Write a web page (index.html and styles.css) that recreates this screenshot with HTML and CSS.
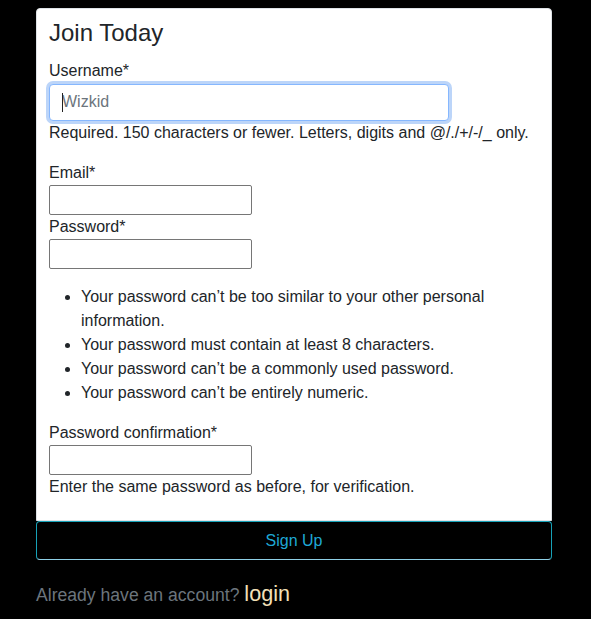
FILE: index.html
```html
<!DOCTYPE html>
<html lang="en">
<head>
<meta charset="utf-8">
<title>Join Today</title>
<link rel="stylesheet" href="styles.css">
</head>
<body>
<div class="page">
  <form class="card">
    <h1 class="title">Join Today</h1>
    <label class="label">Username*</label>
    <div class="focus-wrap">
      <input class="input input-focus" type="text" placeholder="Wizkid">
      <span class="caret"></span>
    </div>
    <p class="help help-gap">Required. 150 characters or fewer. Letters, digits and @/./+/-/_ only.</p>
    <label class="label">Email*</label>
    <input class="input input-plain" type="email">
    <label class="label">Password*</label>
    <input class="input input-plain" type="password">
    <ul class="rules">
      <li>Your password can’t be too similar to your other personal information.</li>
      <li>Your password must contain at least 8 characters.</li>
      <li>Your password can’t be a commonly used password.</li>
      <li>Your password can’t be entirely numeric.</li>
    </ul>
    <label class="label">Password confirmation*</label>
    <input class="input input-plain" type="password">
    <p class="help">Enter the same password as before, for verification.</p>
  </form>
  <button class="signup" type="button">Sign Up</button>
  <div class="already">Already have an account? <a class="login" href="#">login</a></div>
</div>
</body>
</html>
```
FILE: styles.css
```css
html, body {
  margin: 0;
  background: #000;
}
body {
  font-family: "Liberation Sans", Arial, sans-serif;
  font-size: 16px;
  line-height: 1.5;
  color: #212529;
}
.page {
  padding: 8px 0 0 36px;
  width: 516px;
}
.card {
  display: flex;
  flex-direction: column;
  align-items: flex-start;
  background: #fff;
  border: 1px solid #dee2e6;
  border-radius: 4px 4px 0 0;
  padding: 10px 12px 21px;
}
.title {
  font-size: 24px;
  font-weight: 400;
  line-height: 1.2;
  margin: 0 0 11px;
}
.label {
  display: block;
  line-height: 24px;
}
.focus-wrap {
  position: relative;
  margin-top: 1px;
}
.input {
  box-sizing: border-box;
  font-family: inherit;
  font-size: 16px;
  margin: 0;
  background: #fff;
  color: #495057;
}
.input-focus {
  display: block;
  width: 400px;
  height: 37px;
  padding: 0 12px;
  border: 1px solid #86b7fe;
  border-radius: 4px;
  box-shadow: 0 0 0 3px #bcd5f9;
  outline: none;
}
.input-focus::placeholder {
  color: #6c757d;
}
.caret {
  position: absolute;
  left: 13px;
  top: 9px;
  width: 1px;
  height: 19px;
  background: #222;
}
.input-plain {
  display: block;
  width: 203px;
  height: 30px;
  padding: 1px 2px;
  border: 1px solid #767676;
  border-radius: 2px;
}
.help {
  margin: 0;
  line-height: 24px;
}
.help-gap {
  margin-bottom: 16px;
}
.rules {
  margin: 16px 0;
  padding-left: 32px;
  line-height: 24px;
}
.signup {
  display: block;
  box-sizing: border-box;
  width: 516px;
  height: 39px;
  margin: 0;
  padding: 2px 0 0;
  background: #000;
  border: 1px solid #17a2b8;
  border-bottom-color: #8fd0e6;
  border-radius: 4px;
  color: #1fa8d6;
  font-family: inherit;
  font-size: 16px;
  cursor: pointer;
}
.already {
  margin-top: 21px;
  font-size: 17.6px;
  line-height: 26px;
  color: #6c757d;
}
.login {
  font-size: 21.6px;
  color: #f3e0b8;
  text-decoration: none;
}
```
